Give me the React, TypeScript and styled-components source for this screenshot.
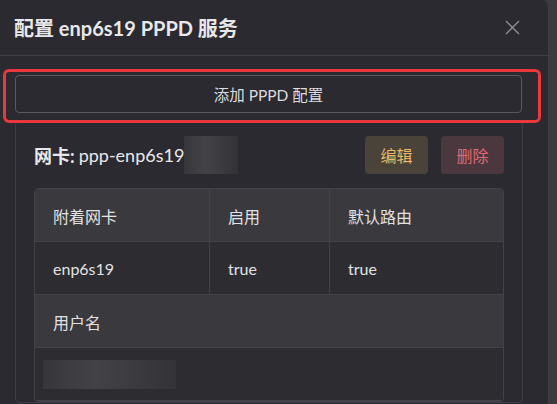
import React from "react";
import styled, { createGlobalStyle } from "styled-components";

const Global = createGlobalStyle`
  html, body { margin: 0; padding: 0; }
  body {
    background: #3b3b3f;
    font-family: "Lato", "Noto Sans CJK SC", sans-serif;
    color: #e4e4e6;
    overflow: hidden;
  }
`;

const Page = styled.div`
  position: relative;
  width: 557px;
  height: 404px;
  overflow: hidden;
`;

const Modal = styled.div`
  margin-left: -11px;
  width: 560px;
  height: 420px;
  background: #2b2a30;
  border-top-right-radius: 7px;
  border-right: 1px solid #3e3e43;
  box-sizing: border-box;
`;

const Header = styled.div`
  height: 56px;
  box-sizing: border-box;
  padding: 0 28px 0 25px;
  display: flex;
  align-items: center;
  justify-content: space-between;
  border-bottom: 1px solid #404045;
`;

const Title = styled.h2`
  margin: 0;
  font-size: 20px;
  font-weight: 700;
  color: #e8e8ea;
`;

const Close = styled.button`
  width: 16px;
  height: 16px;
  padding: 0;
  border: none;
  background: none;
  display: flex;
  align-items: center;
  justify-content: center;
`;

const Body = styled.div`
  padding: 19px 26px 0 26px;
`;

const AddButton = styled.button`
  width: 100%;
  height: 38px;
  box-sizing: border-box;
  background: #2b2a30;
  border: 1px solid #59595e;
  border-radius: 4px;
  color: #dcdcde;
  font-family: "Lato", "Noto Sans CJK SC", sans-serif;
  font-size: 15.5px;
  display: block;
`;

const Card = styled.div`
  margin-top: 8px;
  border: 1px solid #3d3d42;
  border-radius: 4px;
  padding: 14px 18px 0 18px;
  width: 508px;
  box-sizing: border-box;
`;

const CardHead = styled.div`
  display: flex;
  align-items: center;
  justify-content: space-between;
  height: 38px;
`;

const Iface = styled.div`
  display: flex;
  align-items: center;
  font-size: 18px;
  color: #e8e8ea;
  b { font-weight: 700; margin-right: 4px; }
`;

const Blur = styled.span<{ $w: number; $h: number }>`
  display: inline-block;
  width: ${(p) => p.$w}px;
  height: ${(p) => p.$h}px;
  background: linear-gradient(90deg, #37363b 0%, #434247 40%, #3a393e 75%, #333237 100%);
`;

const Actions = styled.div`
  display: flex;
  gap: 13px;
`;

const Action = styled.button<{ $bg: string; $fg: string }>`
  width: 63px;
  height: 38px;
  border: none;
  border-radius: 4px;
  background: ${(p) => p.$bg};
  color: ${(p) => p.$fg};
  font-family: "Noto Sans CJK SC", sans-serif;
  font-size: 16px;
`;

const Table = styled.div`
  margin-top: 14px;
  border: 1px solid #424247;
  border-radius: 4px;
  overflow: hidden;
  display: grid;
  grid-template-columns: 175px 120px 1fr;
`;

const Cell = styled.div<{ $head?: boolean; $span?: number; $last?: boolean }>`
  height: 53px;
  box-sizing: border-box;
  display: flex;
  align-items: center;
  padding-left: 18px;
  font-size: 16px;
  color: #e2e2e4;
  background: ${(p) => (p.$head ? "#3a393e" : "#2d2c31")};
  border-bottom: 1px solid #424247;
  border-right: ${(p) => (p.$last ? "none" : "1px solid #424247")};
  grid-column: ${(p) => (p.$span ? `span ${p.$span}` : "auto")};
  padding-top: 1px;
`;

const Highlight = styled.div`
  position: absolute;
  left: 3px;
  top: 69px;
  width: 538px;
  height: 54px;
  box-sizing: border-box;
  border: 3px solid #ea393e;
  border-radius: 6px;
  pointer-events: none;
`;

export default function App() {
  return (
    <>
      <Global />
      <Page>
        <Modal>
          <Header>
            <Title>配置 enp6s19 PPPD 服务</Title>
            <Close aria-label="close">
              <svg width="15" height="15" viewBox="0 0 15 15">
                <path d="M1 1 L14 14 M14 1 L1 14" stroke="#8d8d92" strokeWidth="1.4" />
              </svg>
            </Close>
          </Header>
          <Body>
            <AddButton>添加 PPPD 配置</AddButton>
            <Card>
              <CardHead>
                <Iface>
                  <b>网卡:</b>ppp-enp6s19
                  <Blur $w={54} $h={38} />
                </Iface>
                <Actions>
                  <Action $bg="#4a4339" $fg="#e9b866">编辑</Action>
                  <Action $bg="#4a383e" $fg="#e06a72">删除</Action>
                </Actions>
              </CardHead>
              <Table>
                <Cell $head>附着网卡</Cell>
                <Cell $head>启用</Cell>
                <Cell $head $last>默认路由</Cell>
                <Cell>enp6s19</Cell>
                <Cell>true</Cell>
                <Cell $last>true</Cell>
                <Cell $head $span={3} $last>用户名</Cell>
                <Cell $span={3} $last style={{ paddingLeft: 8 }}>
                  <Blur $w={133} $h={29} />
                </Cell>
              </Table>
            </Card>
          </Body>
        </Modal>
        <Highlight />
      </Page>
    </>
  );
}
